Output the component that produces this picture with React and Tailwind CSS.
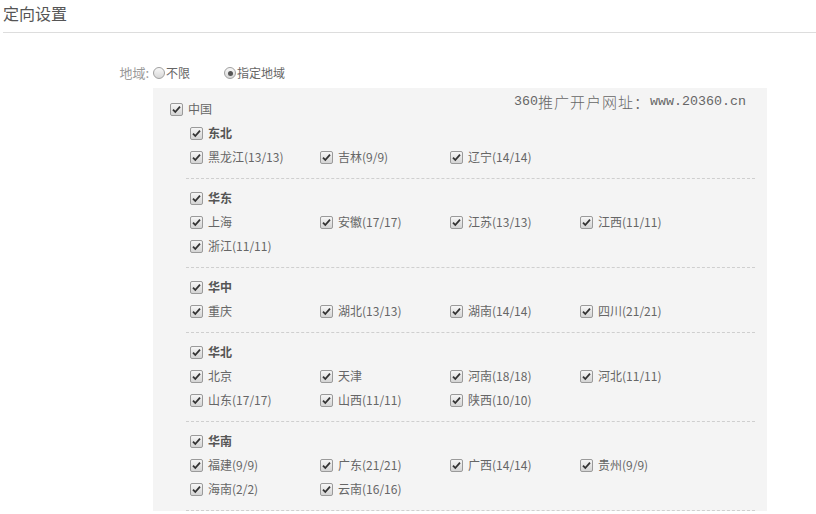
import React from 'react';

const regions = [
  { name: '东北', items: ['黑龙江(13/13)', '吉林(9/9)', '辽宁(14/14)'] },
  { name: '华东', items: ['上海', '安徽(17/17)', '江苏(13/13)', '江西(11/11)', '浙江(11/11)'] },
  { name: '华中', items: ['重庆', '湖北(13/13)', '湖南(14/14)', '四川(21/21)'] },
  { name: '华北', items: ['北京', '天津', '河南(18/18)', '河北(11/11)', '山东(17/17)', '山西(11/11)', '陕西(10/10)'] },
  { name: '华南', items: ['福建(9/9)', '广东(21/21)', '广西(14/14)', '贵州(9/9)', '海南(2/2)', '云南(16/16)'] },
];

const mono = { fontFamily: '"Liberation Mono", monospace' };

function Check() {
  return (
    <span className="inline-flex w-[13px] h-[13px] shrink-0 items-center justify-center rounded-[2px] border border-[#9a9a9a] bg-gradient-to-b from-[#f6f6f6] to-[#d4d4d4]">
      <svg width="9" height="9" viewBox="0 0 9 9">
        <path d="M1 4.6 L3.3 7 L8 1.6" fill="none" stroke="#333" strokeWidth="1.8" />
      </svg>
    </span>
  );
}

function Radio({ on }) {
  return (
    <span className="inline-flex w-[12px] h-[12px] shrink-0 items-center justify-center rounded-full border border-[#a0a0a0] bg-gradient-to-b from-[#f8f8f8] to-[#d8d8d8]">
      {on && <span className="w-[5px] h-[5px] rounded-full bg-[#555]" />}
    </span>
  );
}

function Item({ label, bold }) {
  return (
    <div className="flex items-center gap-[5px] h-6">
      <Check />
      <span className={bold ? 'font-bold text-[#555]' : ''}>{label}</span>
    </div>
  );
}

export default function App() {
  return (
    <div className="min-h-screen bg-white pl-[3px] text-[12px] text-[#666]" style={{ fontFamily: '"Noto Sans CJK SC", "Noto Sans", sans-serif' }}>
      {/* 标题 */}
      <div className="h-[33px] border-b border-[#dddddd]">
        <h2 className="text-[16px] leading-[26px] text-[#555]">定向设置</h2>
      </div>

      {/* 地域 */}
      <div className="mt-[28px] flex items-center h-6">
        <div className="w-[150px] pr-[4px] text-right text-[13px] text-[#999]">地域:</div>
        <label className="flex items-center w-[71px]">
          <Radio />
          <span className="ml-[1px]">不限</span>
        </label>
        <label className="flex items-center">
          <Radio on />
          <span className="ml-[1px]">指定地域</span>
        </label>
      </div>

      <div className="ml-[150px] mt-[3px] w-[614px] bg-[#f4f4f4] pl-[17px] pr-3 pt-[9px] relative">
        {/* 水印 */}
        <div className="absolute top-[4px] left-[361px] flex items-center h-[20px] text-[#666] whitespace-nowrap">
          <span style={mono} className="text-[13.33px]">360</span>
          <span className="text-[15px] tracking-[1px] font-light">推广开户网址：</span>
          <span style={mono} className="text-[13.33px]">www.20360.cn</span>
        </div>

        <Item label="中国" />

        <div className="ml-4">
          {regions.map((r, i) => (
            <div key={r.name} className={`pl-1 pb-[9px] border-b border-dashed border-[#cfcfcf] ${i === 0 ? '' : 'pt-[7px]'}`}>
              <Item label={r.name} bold />
              <div className="grid grid-cols-[130px_130px_130px_130px]">
                {r.items.map((it) => (
                  <Item key={it} label={it} />
                ))}
              </div>
            </div>
          ))}
        </div>
      </div>
    </div>
  );
}
